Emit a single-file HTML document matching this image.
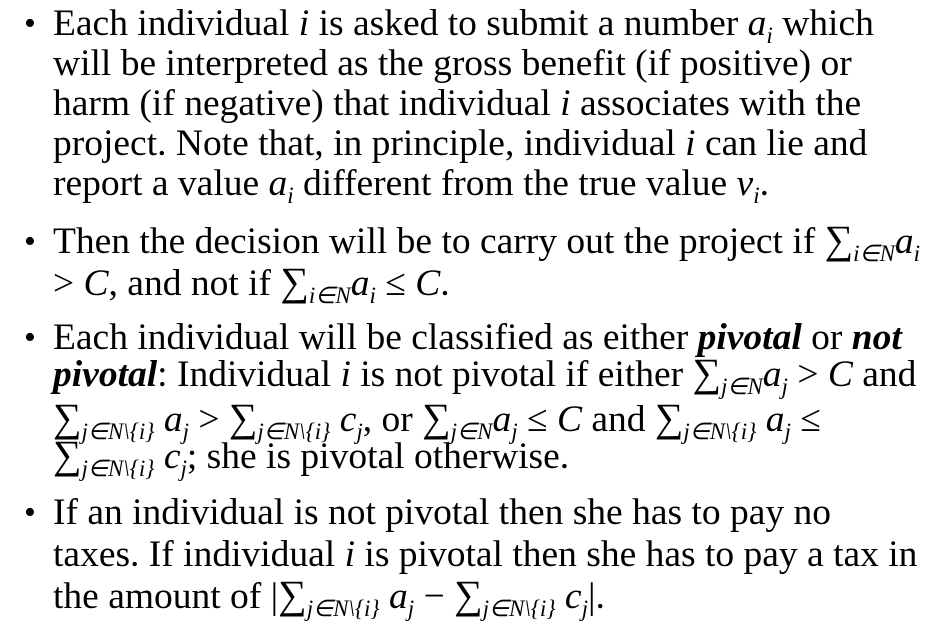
<!DOCTYPE html>
<html><head><meta charset="utf-8"><style>
body{margin:0;background:#fff;width:946px;height:642px;overflow:hidden;position:relative;font-family:"Liberation Serif","Times New Roman",serif;font-size:37.5px;color:#000}
.l{position:absolute;left:53px;white-space:nowrap;line-height:32px}
.b{position:absolute;left:24px;font-size:34px;line-height:32px}
i{font-style:italic}
sub{font-size:23px;vertical-align:-8px;line-height:0;font-style:italic}
.s{font-size:40px;line-height:0}
</style></head><body>
<div class="b" style="top:8px">•</div>
<div class="l" style="top:8px">Each individual <i>i</i> is asked to submit a number <i>a<sub>i</sub></i> which</div>
<div class="l" style="top:48px">will be interpreted as the gross benefit (if positive) or</div>
<div class="l" style="top:88px">harm (if negative) that individual <i>i</i> associates with the</div>
<div class="l" style="top:128px">project. Note that, in principle, individual <i>i</i> can lie and</div>
<div class="l" style="top:168px">report a value <i>a<sub>i</sub></i> different from the true value <i>v<sub>i</sub></i>.</div>
<div class="b" style="top:226px">•</div>
<div class="l" style="top:226px">Then the decision will be to carry out the project if <span class="s">∑</span><sub>i∈N</sub><i>a<sub>i</sub></i></div>
<div class="l" style="top:268px">&gt; <i>C</i>, and not if <span class="s">∑</span><sub>i∈N</sub><i>a<sub>i</sub></i> ≤ <i>C</i>.</div>
<div class="b" style="top:322px">•</div>
<div class="l" style="top:322px">Each individual will be classified as either <b><i>pivotal</i></b> or <b><i>not</i></b></div>
<div class="l" style="top:359px"><b><i>pivotal</i></b>: Individual <i>i</i> is not pivotal if either <span class="s">∑</span><sub>j∈N</sub><i>a<sub>j</sub></i> &gt; <i>C</i> and</div>
<div class="l" style="top:404px"><span class="s">∑</span><sub>j∈N\{i}</sub> <i>a<sub>j</sub></i> &gt; <span class="s">∑</span><sub>j∈N\{i}</sub> <i>c<sub>j</sub></i>, or <span class="s">∑</span><sub>j∈N</sub><i>a<sub>j</sub></i> ≤ <i>C</i> and <span class="s">∑</span><sub>j∈N\{i}</sub> <i>a<sub>j</sub></i> ≤</div>
<div class="l" style="top:441px"><span class="s">∑</span><sub>j∈N\{i}</sub> <i>c<sub>j</sub></i>; she is pivotal otherwise.</div>
<div class="b" style="top:497px">•</div>
<div class="l" style="top:497px">If an individual is not pivotal then she has to pay no</div>
<div class="l" style="top:539px">taxes. If individual <i>i</i> is pivotal then she has to pay a tax in</div>
<div class="l" style="top:581px">the amount of |<span class="s">∑</span><sub>j∈N\{i}</sub> <i>a<sub>j</sub></i> − <span class="s">∑</span><sub>j∈N\{i}</sub> <i>c<sub>j</sub></i>|.</div>
</body></html>
